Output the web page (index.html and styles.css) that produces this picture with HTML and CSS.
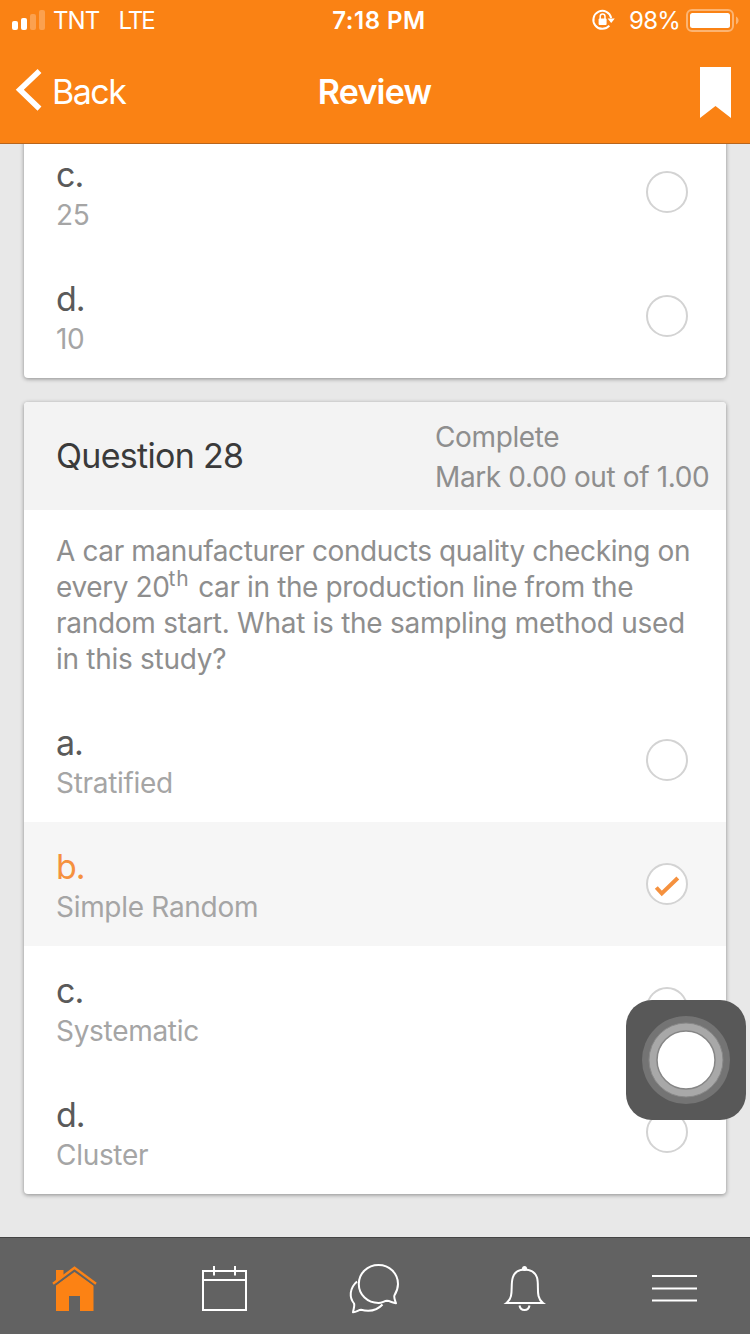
FILE: index.html
```html
<!DOCTYPE html>
<html lang="en">
<head>
  <meta charset="UTF-8">
  <title>Review</title>
  <meta name="viewport" content="width=device-width,initial-scale=1">
  <link rel="stylesheet" href="styles.css">
</head>
<body>
  <header class="header">
    <div class="status-bar">
      <div class="status-left">
        <svg class="signal" width="34" height="22" viewBox="0 0 34 22">
          <rect x="0" y="11" width="6" height="9" rx="2" fill="#fff"/>
          <rect x="9" y="8" width="6" height="12" rx="2" fill="#fff"/>
          <rect x="18" y="4" width="6" height="16" rx="2" fill="#fff" opacity=".25"/>
          <rect x="27" y="0" width="6" height="20" rx="2" fill="#fff" opacity=".25"/>
        </svg>
        <span class="carrier">TNT</span>
        <span class="network">LTE</span>
      </div>
      <div class="status-time">7:18 PM</div>
      <div class="status-right">
        <svg width="24" height="22" viewBox="0 0 24 22">
          <path d="M17.3 15.6A9 9 0 1 1 19.2 8" fill="none" stroke="#fff" stroke-width="2"/>
          <path d="M15.6 8.4h7.2l-3.6 4.5z" fill="#fff"/>
          <rect x="6.6" y="8.4" width="8" height="6.6" rx="1" fill="#fff"/>
          <path d="M8.2 9V6.4a2.4 2.4 0 0 1 4.8 0V9" fill="none" stroke="#fff" stroke-width="1.5"/>
        </svg>
        <span class="percent">98%</span>
        <svg class="battery" width="54" height="24" viewBox="0 0 54 24">
          <rect x="1" y="1" width="46" height="21" rx="5" fill="none" stroke="#fff" stroke-width="2" opacity=".4"/>
          <rect x="4" y="4" width="40" height="15" rx="2.5" fill="#fff"/>
          <path d="M50 7.5c3.4 1.4 3.4 6.6 0 8z" fill="#fff" opacity=".4"/>
        </svg>
      </div>
    </div>
    <div class="nav-bar">
      <div class="back">
        <svg width="26" height="44" viewBox="0 0 26 44">
          <path d="M24.5 1L4.8 19.8L24.5 38.6" fill="none" stroke="#fff" stroke-width="5.6"/>
        </svg>
        <span>Back</span>
      </div>
      <div class="nav-title">Review</div>
      <div class="bookmark">
        <svg width="31" height="51" viewBox="0 0 31 51">
          <path d="M0 1h31v51L15.5 40L0 52z" fill="#fff"/>
        </svg>
      </div>
    </div>
  </header>

  <main class="content">
    <section class="card first">
      <div class="option">
        <div class="option-text">
          <div class="letter">c.</div>
          <div class="answer">25</div>
        </div>
        <div class="radio"></div>
      </div>
      <div class="option">
        <div class="option-text">
          <div class="letter">d.</div>
          <div class="answer">10</div>
        </div>
        <div class="radio"></div>
      </div>
    </section>

    <section class="card">
      <div class="card-header">
        <div class="card-title">Question 28</div>
        <div class="card-info">
          <div class="state">Complete</div>
          <div class="mark">Mark 0.00 out of 1.00</div>
        </div>
      </div>
      <div class="question">
        <div>A car manufacturer conducts quality checking on</div>
        <div>every 20<sup>th</sup> car in the production line from the</div>
        <div class="loose">random start. What is the sampling method used</div>
        <div class="loose">in this study?</div>
      </div>
      <div class="option">
        <div class="option-text">
          <div class="letter">a.</div>
          <div class="answer">Stratified</div>
        </div>
        <div class="radio"></div>
      </div>
      <div class="option selected">
        <div class="option-text">
          <div class="letter">b.</div>
          <div class="answer">Simple Random</div>
        </div>
        <div class="radio">
          <svg width="38" height="38" viewBox="0 0 38 38">
            <path d="M8.3 22.5L13.8 28.5L29.8 13" fill="none" stroke="#f5913e" stroke-width="4"/>
          </svg>
        </div>
      </div>
      <div class="option">
        <div class="option-text">
          <div class="letter">c.</div>
          <div class="answer">Systematic</div>
        </div>
        <div class="radio"></div>
      </div>
      <div class="option">
        <div class="option-text">
          <div class="letter">d.</div>
          <div class="answer">Cluster</div>
        </div>
        <div class="radio"></div>
      </div>
    </section>
  </main>

  <nav class="tab-bar">
    <div class="tab">
      <svg width="50" height="50" viewBox="0 0 50 50">
        <path d="M6 5h7.5v7l-7.5 6z" fill="#fc8214"/>
        <path d="M6 20.5L24.5 6L43.5 20.5V46H30V31H19V46H6z" fill="#fc8214"/>
        <path d="M4 20.5L24.5 5.6L45 20.5" fill="none" stroke="#626262" stroke-width="2"/>
        <path d="M3 18.7L24.5 2.8L46 18.7" fill="none" stroke="#fc8214" stroke-width="2.4"/>
      </svg>
    </div>
    <div class="tab">
      <svg width="50" height="50" viewBox="0 0 50 50" fill="none" stroke="#fff" stroke-width="2">
        <path d="M3 6h43v39H3zM3 15h43M14 1v9.5M35 1v9.5"/>
      </svg>
    </div>
    <div class="tab">
      <svg width="50" height="50" viewBox="0 0 50 50" fill="none" stroke="#fff" stroke-width="2" stroke-linejoin="round">
        <path d="M28.5 0C17.5 0 8.8 8.2 8.8 19S17.500 38 28.5 38C32 38 34 36 37 35.8C40 36 42 37.5 46 38.3C44.8 34.5 43.7 32.5 44.4 30.5C46.5 27 48 24 48 19C48 8.5 39.5 0 28.5 0z"/>
        <path d="M7 16.5C-.8 23.5-.8 32.5 4 38.5C5 40.5 3.5 44 3 47.3C7 46.8 8.5 44.8 11 44.8C19.5 47 27 45.500 32.500 39.500"/>
      </svg>
    </div>
    <div class="tab">
      <svg width="50" height="50" viewBox="0 0 50 50" fill="none" stroke="#fff" stroke-width="2">
        <path d="M6.5 38C14.5 32 10 21 12.8 12.5C15 6 19.5 4.5 24.5 4.5S34.5 6 37 12.5C39.5 21 35 32 43 38z"/>
        <circle cx="24.5" cy="3.5" r="2.5" fill="#fff" stroke="none"/>
        <path d="M19.5 40.5C20.5 46.5 28.5 46.5 29.5 40.5"/>
      </svg>
    </div>
    <div class="tab">
      <svg width="50" height="50" viewBox="0 0 50 50" fill="none" stroke="#fff" stroke-width="2">
        <path d="M2 11h45M2 23.5h45M2 35.5h45"/>
      </svg>
    </div>
  </nav>

  <div class="assistive">
    <svg width="120" height="120" viewBox="0 0 120 120">
      <circle cx="60" cy="60" r="44" fill="#747474"/>
      <circle cx="60" cy="60" r="37" fill="#a8a8a8" stroke="#888" stroke-width="1"/>
      <circle cx="60" cy="60" r="29" fill="#fff" stroke="#868686" stroke-width="1.5"/>
    </svg>
  </div>
</body>
</html>
```
FILE: styles.css
```css
html, body {
  height: 100%;
  margin: 0;
  padding: 0;
}
body {
  display: flex;
  flex-direction: column;
  overflow: hidden;
  font-family: Inter, "Liberation Sans", sans-serif;
  background: #e8e8e8;
}
* {
  box-sizing: border-box;
}
svg {
  display: block;
  overflow: visible;
  flex-shrink: 0;
}

.header {
  height: 144px;
  flex-shrink: 0;
  background: #fa8214;
  border-bottom: 1px solid #b8651c;
  color: #fff;
  position: relative;
  z-index: 2;
}
.status-bar {
  height: 40px;
  display: grid;
  grid-template-columns: 1fr auto 1fr;
  align-items: center;
  padding: 2px 10px 0 12px;
  font-size: 24px;
  line-height: 38px;
}
.status-left, .status-right {
  display: flex;
  align-items: center;
}
.status-right {
  justify-content: flex-end;
}
.carrier {
  margin-left: 7px;
  letter-spacing: -0.9px;
}
.network {
  margin-left: 19px;
  letter-spacing: -2px;
}
.status-time {
  font-weight: 600;
  letter-spacing: 0.5px;
  padding-left: 6px;
}
.percent {
  margin: 0 6px 0 13px;
  letter-spacing: -0.8px;
}
.nav-bar {
  height: 103px;
  display: grid;
  grid-template-columns: 1fr auto 1fr;
  align-items: center;
  padding: 0 19px 0 15px;
  font-size: 34px;
  line-height: 40px;
}
.back {
  display: flex;
  align-items: center;
  gap: 11px;
  letter-spacing: -1.5px;
}
.nav-title {
  font-weight: 600;
  letter-spacing: -0.8px;
  padding-left: 3px;
}
.bookmark {
  justify-self: end;
}

.content {
  flex: 1;
  min-height: 0;
  overflow: hidden;
  padding: 0 24px;
}
.card {
  background: #fff;
  border-radius: 4px;
  box-shadow: 0 1px 4px rgba(0, 0, 0, 0.4);
  margin-bottom: 24px;
}
.card.first {
  margin-top: -14px;
}
.card-header {
  height: 108px;
  display: flex;
  align-items: center;
  justify-content: space-between;
  background: #f3f3f3;
  border-radius: 4px 4px 0 0;
  padding: 0 0 0 32px;
}
.card-title {
  font-size: 34px;
  line-height: 40px;
  letter-spacing: -0.7px;
  color: #3a3a3a;
}
.card-info {
  width: 291px;
  font-size: 28px;
  line-height: 40px;
  letter-spacing: -0.38px;
  padding-top: 1px;
  color: #8e8e8e;
  white-space: nowrap;
}
.question {
  height: 188px;
  padding: 23px 32px 0;
  font-size: 28px;
  line-height: 36px;
  letter-spacing: -0.38px;
  color: #8e8e8e;
  white-space: nowrap;
}
.question .loose {
  letter-spacing: -0.28px;
}
.question sup {
  font-size: 21px;
  line-height: 0;
  letter-spacing: 0.9px;
  margin-left: -1px;
  margin-right: 1px;
  vertical-align: 11px;
}
.option {
  height: 124px;
  display: flex;
  align-items: center;
  justify-content: space-between;
  padding: 0 38px 0 32px;
}
.option-text {
  padding-top: 5px;
}
.letter {
  font-size: 34px;
  line-height: 40px;
  letter-spacing: -1px;
  color: #5a5a5a;
}
.answer {
  font-size: 28px;
  line-height: 40px;
  letter-spacing: -0.3px;
  color: #a5a5a5;
}
.radio {
  width: 42px;
  height: 42px;
  border: 2px solid #d3d3d3;
  border-radius: 50%;
  background: #fff;
}
.option.selected {
  background: #f6f6f6;
}
.selected .letter {
  color: #f5913e;
}

.tab-bar {
  height: 97px;
  flex-shrink: 0;
  display: grid;
  grid-template-columns: repeat(5, 1fr);
  background: #626262;
  border-top: 1px solid #444;
}
.tab {
  display: flex;
  justify-content: center;
  padding-top: 27px;
}

/* floating button, stays above the list */
.assistive {
  position: absolute;
  right: 4px;
  top: 1000px;
  width: 120px;
  height: 120px;
  border-radius: 26px;
  background: #585858;
  z-index: 3;
}
```
